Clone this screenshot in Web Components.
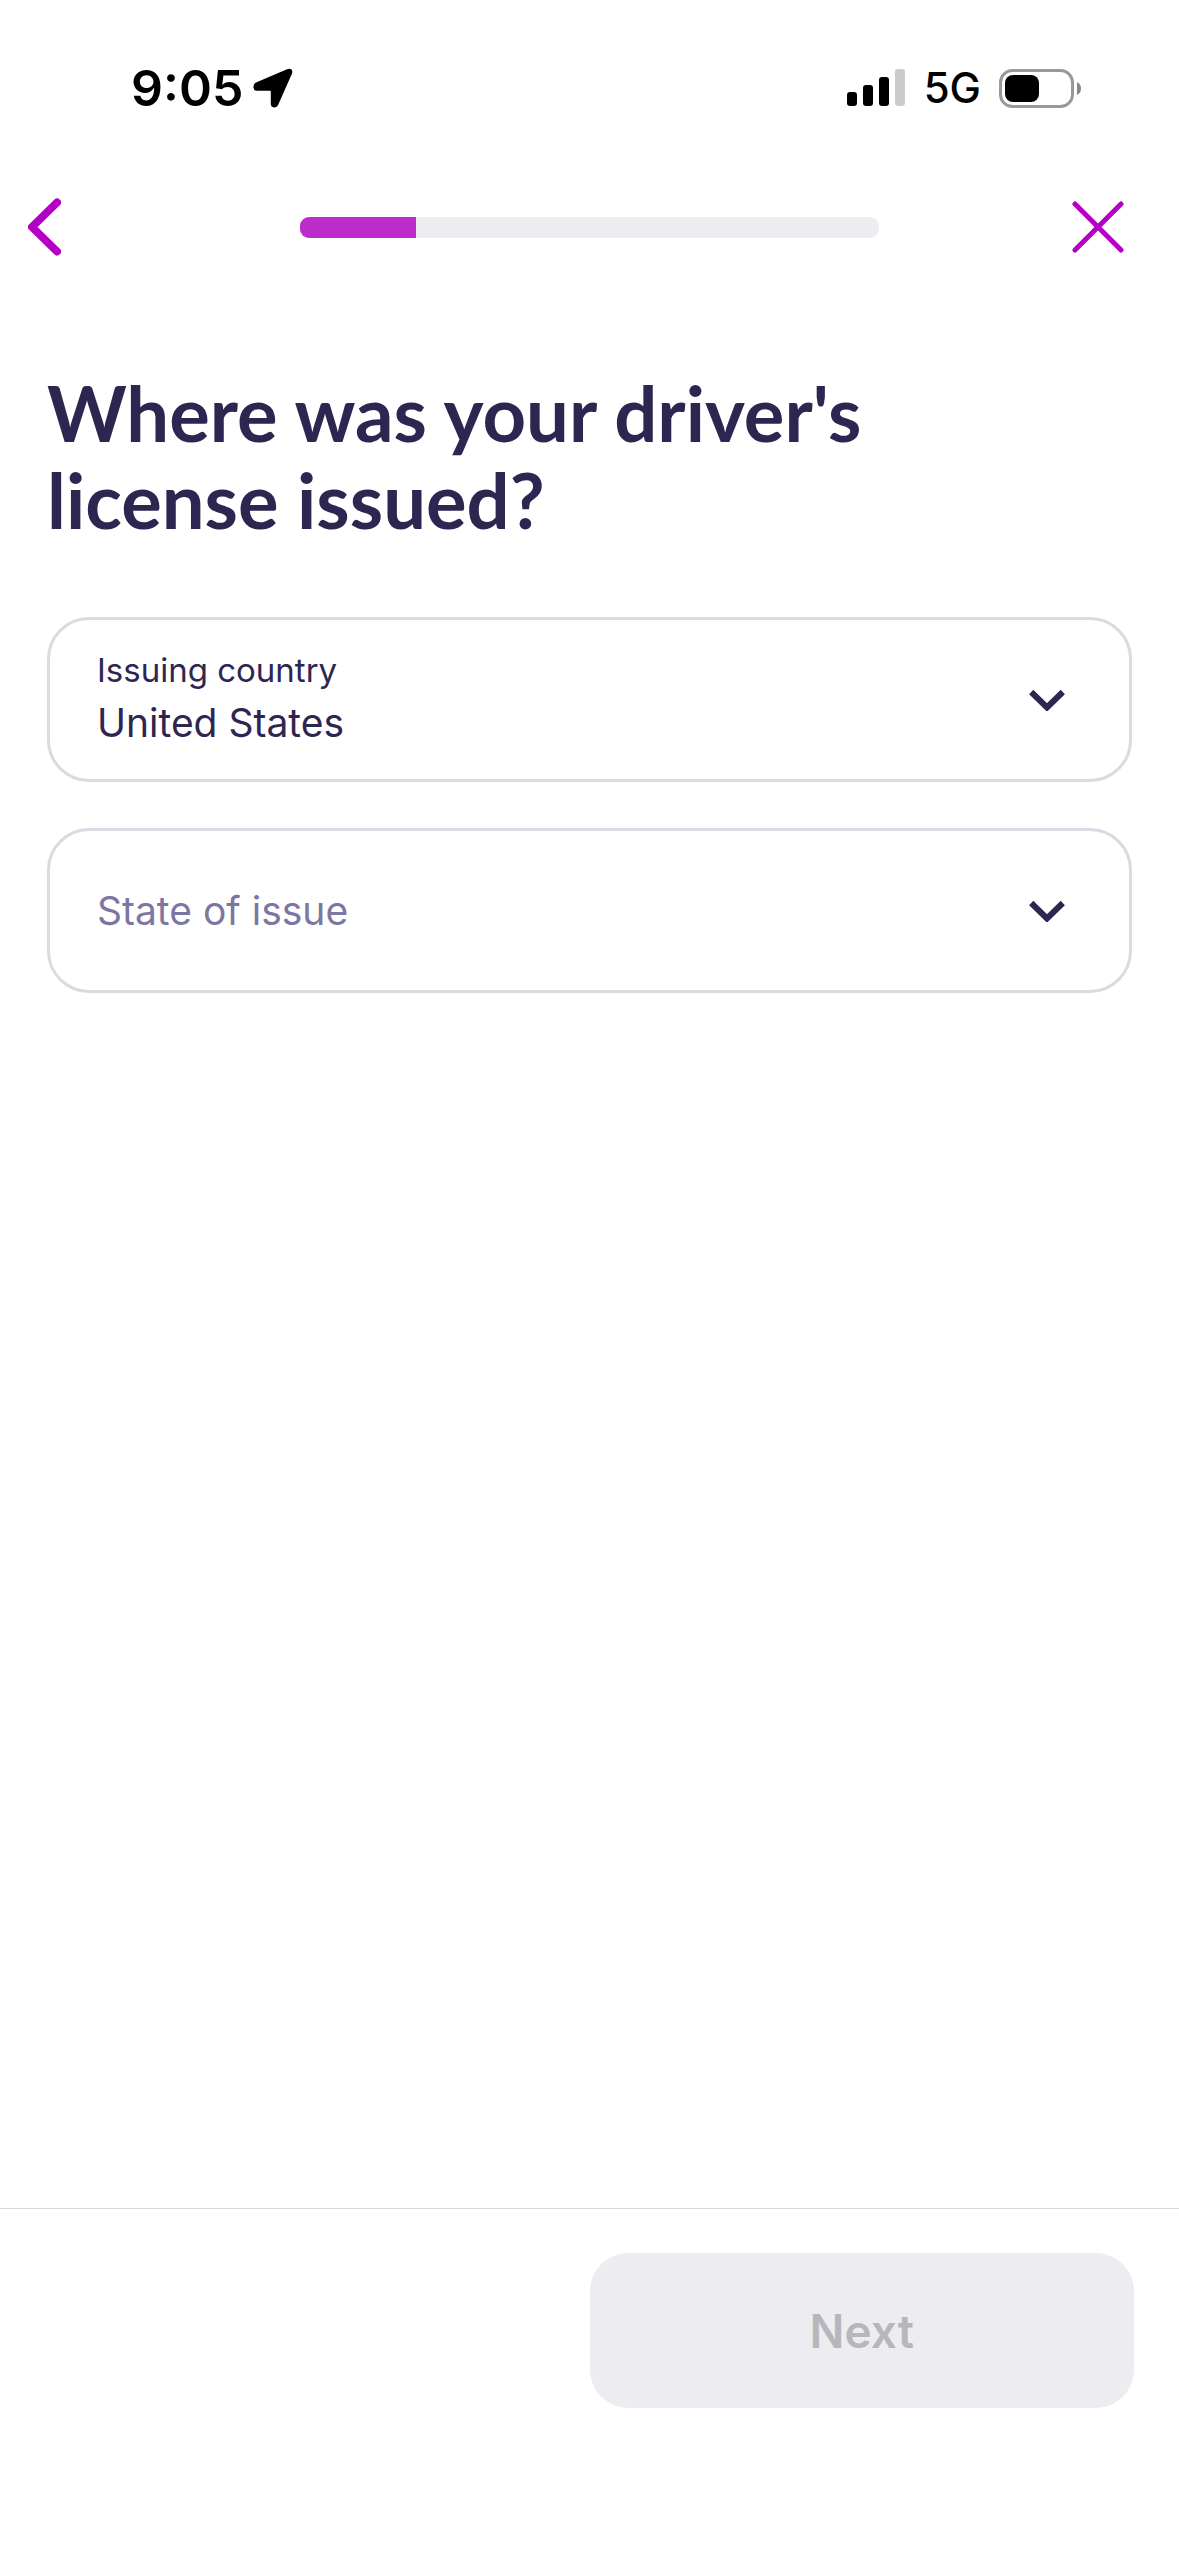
<!DOCTYPE html>
<html lang="en">
<head>
<meta charset="utf-8">
<meta name="viewport" content="width=device-width, initial-scale=1">
<title>Driver's license</title>
<style>
  body { margin: 0; background: #fff; }
</style>
</head>
<body>
<license-screen></license-screen>
<script>
  const define = (name, html, setup) => {
    const template = document.createElement('template');
    template.innerHTML = html;
    customElements.define(name, class extends HTMLElement {
      constructor() {
        super();
        this.attachShadow({ mode: 'open' }).append(template.content.cloneNode(true));
      }
      connectedCallback() { if (setup) setup(this, this.shadowRoot); }
    });
  };

  define('status-bar', `
    <style>
      :host { display: flex; justify-content: space-between; align-items: center; height: 176px; padding: 0 97px 0 131px; color: #000; box-sizing: border-box; }
      .group { display: flex; align-items: center; }
      .time { font-size: 50px; font-weight: 600; line-height: 64px; margin-right: 10px; }
      .net { font-size: 42px; font-weight: 500; line-height: 64px; margin: 0 18px; }
      svg { display: block; }
    </style>
    <div class="group">
      <span class="time">9:05</span>
      <svg width="40" height="40" viewBox="0 0 40 40" aria-hidden="true"><path d="M3 14.500 34 1.200Q37 0 38.500 1.500 40 3 38.800 6L25.300 36.500Q24 39.600 21 39.500 17.800 39.200 17.800 35.800V22.800H4.200Q.8 22.500.4 19.400.2 16 3 14.500Z"/></svg>
    </div>
    <div class="group">
      <svg width="59" height="38" viewBox="0 0 59 38" aria-hidden="true"><rect y="23" width="10" height="14" rx="3"/><rect x="16" y="16" width="10" height="21" rx="3"/><rect x="32" y="8" width="10" height="29" rx="3"/><rect x="48" width="10" height="37" rx="3" fill="#ccc"/></svg>
      <span class="net">5G</span>
      <svg width="83" height="39" viewBox="0 0 83 39" aria-hidden="true"><rect x="1.500" y="1.500" width="72" height="36" rx="12" fill="none" stroke="#999" stroke-width="3"/><rect x="6" y="6" width="34" height="27" rx="8"/><path d="M78 13Q82 15 82 19.500T78 26Z" fill="#888"/></svg>
    </div>`);

  define('progress-track', `
    <style>
      :host { display: block; height: 21px; border-radius: 9px; overflow: hidden; background: #ededf1; }
      div { height: 100%; background: #bb2ccb; }
    </style>
    <div></div>`, (host, root) => {
      const value = host.getAttribute('value');
      host.setAttribute('role', 'progressbar');
      host.setAttribute('aria-valuenow', value);
      root.querySelector('div').style.width = value + '%';
    });

  define('nav-bar', `
    <style>
      :host { display: grid; grid-template-columns: 300fr 579fr 300fr; align-items: center; height: 102px; }
      button { border: 0; padding: 0 28px; background: none; height: 100%; display: flex; align-items: center; cursor: pointer; color: #b400c4; }
      .close { justify-self: end; padding: 0 55px; }
      svg { display: block; fill: none; stroke: currentColor; stroke-linecap: round; stroke-linejoin: round; }
    </style>
    <button type="button" aria-label="Back"><svg width="33" height="58" viewBox="0 0 33 58" stroke-width="8"><path d="M29 4.500 4 29 29 53.500"/></svg></button>
    <slot></slot>
    <button type="button" class="close" aria-label="Close"><svg width="52" height="52" viewBox="0 0 52 52" stroke-width="5"><path d="M3 3 49 49M49 3 3 49"/></svg></button>`);

  define('select-field', `
    <style>
      :host { display: grid; grid-template-columns: 1fr auto; align-items: center; height: 165px; box-sizing: border-box; border: 3px solid #dadae3; border-radius: 42px; color: #2e2650; }
      select { grid-area: 1 / 1 / 2 / 3; width: 100%; height: 100%; appearance: none; border: 0; border-radius: inherit; outline: 0; background: none; font: inherit; font-size: 39px; color: inherit; padding: 46px 120px 0 47px; }
      label { grid-area: 1 / 1; font-size: 39px; line-height: 50px; padding-left: 47px; color: #7d76a3; pointer-events: none; }
      :host([filled]) label { font-size: 33px; line-height: 42px; color: inherit; align-self: start; padding-top: 29px; }
      svg { grid-area: 1 / 2; margin-right: 64px; pointer-events: none; fill: none; stroke: currentColor; stroke-width: 6; }
    </style>
    <select id="choice"><option></option></select>
    <label for="choice"><slot></slot></label>
    <svg width="36" height="22" viewBox="0 0 36 22" aria-hidden="true"><path d="M2.200 3 18 18.500 33.800 3"/></svg>`, (host, root) => {
      const select = root.querySelector('select');
      const value = host.getAttribute('value');
      if (value) select.options[0].textContent = value;
      host.toggleAttribute('filled', Boolean(value));
    });

  define('action-footer', `
    <style>
      :host { display: flex; justify-content: flex-end; padding: 44px 45px 148px; border-top: 1px solid #d8d8dc; }
      button { width: 50%; height: 155px; border: 0; border-radius: 38px; background: #ededf1; color: #b7b7bb; font: inherit; font-size: 46px; font-weight: 600; }
    </style>
    <button type="button" disabled><slot></slot></button>`);

  define('license-screen', `
    <style>
      :host { display: flex; flex-direction: column; min-height: 100vh; font-family: Inter, "Liberation Sans", sans-serif; }
      main { flex: 1; display: flex; flex-direction: column; gap: 46px; padding: 91px 47px 0; }
      h1 { margin: 0 0 28px; max-width: 900px; font: 700 76px/87px Lato, sans-serif; color: #2e2650; }
    </style>
    <status-bar></status-bar>
    <nav-bar><progress-track value="20" aria-label="Progress"></progress-track></nav-bar>
    <main>
      <h1>Where was your driver's license issued?</h1>
      <select-field value="United States">Issuing country</select-field>
      <select-field>State of issue</select-field>
    </main>
    <action-footer>Next</action-footer>`);
</script>
</body>
</html>
